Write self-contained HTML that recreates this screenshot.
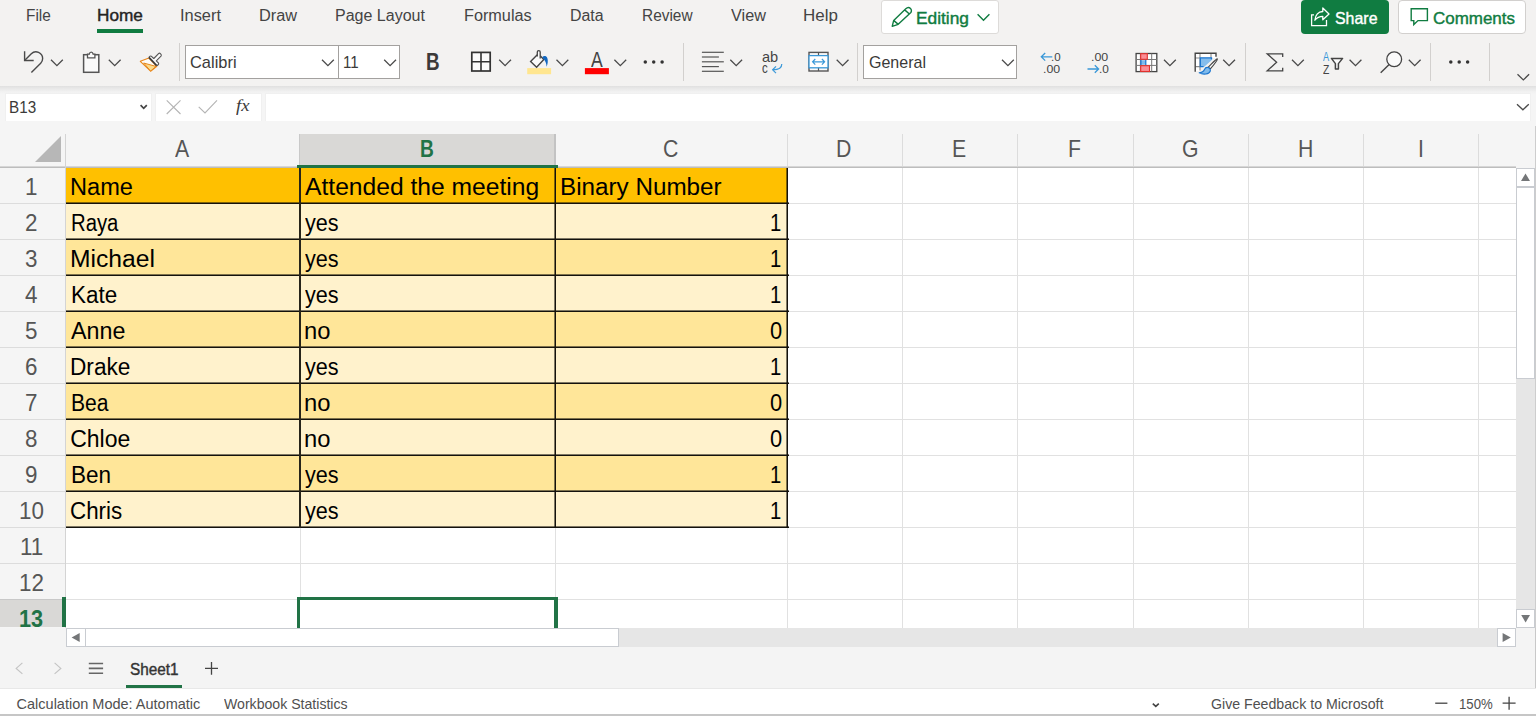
<!DOCTYPE html>
<html lang="en"><head><meta charset="utf-8"><title>Excel</title>
<style>
html,body{margin:0;padding:0}
body{width:1536px;height:716px;position:relative;overflow:hidden;background:#f3f2f1;font-family:"Liberation Sans",sans-serif}
body>div,body>svg,.a{position:absolute}
.t{position:absolute;white-space:nowrap;transform-origin:0 50%;display:block}
svg{overflow:visible}
</style></head><body>
<span class="t" style="left:26.37px;top:6px;font-size:16px;line-height:19px;color:#444;transform:scaleX(0.9596);">File</span>
<span class="t" style="left:179.83px;top:6px;font-size:16px;line-height:19px;color:#444;transform:scaleX(1.0239);">Insert</span>
<span class="t" style="left:258.99px;top:6px;font-size:16px;line-height:19px;color:#444;transform:scaleX(1.0200);">Draw</span>
<span class="t" style="left:335.02px;top:6px;font-size:16px;line-height:19px;color:#444;">Page Layout</span>
<span class="t" style="left:464.00px;top:6px;font-size:16px;line-height:19px;color:#444;transform:scaleX(1.0142);">Formulas</span>
<span class="t" style="left:569.53px;top:6px;font-size:16px;line-height:19px;color:#444;transform:scaleX(0.9945);">Data</span>
<span class="t" style="left:641.57px;top:6px;font-size:16px;line-height:19px;color:#444;transform:scaleX(0.9629);">Review</span>
<span class="t" style="left:731.22px;top:6px;font-size:16px;line-height:19px;color:#444;transform:scaleX(1.0140);">View</span>
<span class="t" style="left:802.94px;top:6px;font-size:16px;line-height:19px;color:#444;transform:scaleX(1.0594);">Help</span>
<span class="t" style="left:97.02px;top:6px;font-size:16px;line-height:19px;color:#252423;-webkit-text-stroke:0.4px #252423;transform:scaleX(1.0753);">Home</span>
<div style="left:97px;top:29px;width:46px;height:3.5px;background:#107c41;"></div>
<div style="left:881px;top:0px;width:118px;height:33.5px;background:#fff;border:1px solid #dddbd9;border-radius:3px;box-sizing:border-box;"></div>
<span class="t" style="left:916.01px;top:8px;font-size:16.5px;line-height:20px;color:#107c41;-webkit-text-stroke:0.4px #107c41;transform:scaleX(1.0497);">Editing</span>
<div style="left:1300.7px;top:0px;width:88.4px;height:33.6px;background:#107c41;border-radius:4px;"></div>
<span class="t" style="left:1335.38px;top:8px;font-size:16.5px;line-height:20px;color:#fff;-webkit-text-stroke:0.4px #fff;transform:scaleX(0.9650);">Share</span>
<div style="left:1398.3px;top:0px;width:128.2px;height:33.6px;background:#fff;border:1px solid #d2d0ce;border-radius:4px;box-sizing:border-box;"></div>
<span class="t" style="left:1433.25px;top:8px;font-size:16.5px;line-height:20px;color:#107c41;-webkit-text-stroke:0.4px #107c41;transform:scaleX(1.0271);">Comments</span>
<div style="left:179px;top:43px;width:1px;height:38px;background:#d2d0ce;"></div>
<div style="left:683px;top:43px;width:1px;height:38px;background:#d2d0ce;"></div>
<div style="left:857px;top:43px;width:1px;height:38px;background:#d2d0ce;"></div>
<div style="left:1245px;top:43px;width:1px;height:38px;background:#d2d0ce;"></div>
<div style="left:1430px;top:43px;width:1px;height:38px;background:#d2d0ce;"></div>
<div style="left:1489px;top:43px;width:1px;height:38px;background:#d2d0ce;"></div>
<div style="left:185px;top:45px;width:154px;height:34px;background:#fff;border:1px solid #a3a19f;box-sizing:border-box;"></div>
<div style="left:338px;top:45px;width:62px;height:34px;background:#fff;border:1px solid #a3a19f;box-sizing:border-box;"></div>
<span class="t" style="left:189.98px;top:53px;font-size:17px;line-height:20px;color:#3b3a39;transform:scaleX(0.9663);">Calibri</span>
<span class="t" style="left:343.17px;top:53px;font-size:17px;line-height:20px;color:#3b3a39;transform:scaleX(0.8872);">11</span>
<div style="left:863px;top:45px;width:154px;height:34px;background:#fff;border:1px solid #a3a19f;box-sizing:border-box;"></div>
<span class="t" style="left:869.00px;top:53px;font-size:17px;line-height:20px;color:#3b3a39;transform:scaleX(0.9422);">General</span>
<span class="t" style="left:426.37px;top:47px;font-size:24px;line-height:29px;color:#3b3a39;font-weight:700;transform:scaleX(0.7855);">B</span>
<div style="left:0px;top:86px;width:1536px;height:36px;background:#f5f5f5;"></div>
<div style="left:0px;top:86px;width:1536px;height:8px;background:linear-gradient(#e0e0e0,#e9e9e9 35%,#f1f1f1 70%,#f5f5f5);"></div>
<div style="left:5.5px;top:94px;width:145.5px;height:27px;background:#fff;box-shadow:0 0 0 1px #f0f0f0;"></div>
<div style="left:156px;top:94px;width:105px;height:27px;background:#fff;box-shadow:0 0 0 1px #f0f0f0;"></div>
<div style="left:266px;top:94px;width:1264px;height:27px;background:#fff;box-shadow:0 0 0 1px #f0f0f0;"></div>
<span class="t" style="left:8.58px;top:98px;font-size:16px;line-height:19px;color:#3b3a39;transform:scaleX(0.9526);">B13</span>
<span class="t" style="left:236.11px;top:95px;font-size:17.5px;line-height:21px;color:#3a3a3a;font-family:'Liberation Serif',serif;font-style:italic;transform:scaleX(1.0699);">fx</span>
<svg class="a" style="left:0;top:0" width="1536" height="125" viewBox="0 0 1536 125">
<path d="M24.6 51.2V60.5H33.7" fill="none" stroke="#4a4a4a" stroke-width="1.4"/>
<path d="M24.8 60.3L31.3 53.8A6.65 6.65 0 0 1 42.65 58.5A6.65 6.65 0 0 1 40.7 63.2L31.4 72.6" fill="none" stroke="#4a4a4a" stroke-width="1.4"/>
<path d="M51 59.8l5.9 5.9l5.9 -5.9" fill="none" stroke="#4a4a4a" stroke-width="1.3"/>
<rect x="83.6" y="54.7" width="15.2" height="17.6" fill="#fafafa" stroke="#555" stroke-width="1.5"/>
<path d="M87.5 57.9V54.2H89.3C89.5 52.9 90.3 52.2 91.2 52.2C92.1 52.2 92.9 52.9 93.1 54.2H94.9V57.9Z" fill="#fafafa" stroke="#555" stroke-width="1.3"/>
<path d="M108.8 59.7l5.9 5.9l5.9 -5.9" fill="none" stroke="#4a4a4a" stroke-width="1.3"/>
<path d="M140.3 61.3L148.9 58L156.8 66.3L150.6 71.2Z" fill="#fdfbf7" stroke="#e8861a" stroke-width="1.1" stroke-linejoin="round"/>
<path d="M143.6 63L156 66.4L150.6 71Z" fill="#fbdc8c" stroke="#e8861a" stroke-width="1" stroke-linejoin="round"/>
<path d="M148.9 57.4C149.5 56.2 150.4 55.8 151.2 56.2L153.8 58.5L158.8 53.4C159.8 52.6 161.8 54.6 161.2 55.8L156.3 60.8L158.6 63.2C159 64 158 65.2 156.7 65.6" fill="#fafafa" stroke="#555" stroke-width="1.1" stroke-linejoin="round"/>
<path d="M148.9 57.4L156.7 65.6" stroke="#3a3a3a" stroke-width="1.6"/>
<path d="M322 59.7l5.9 5.9l5.9 -5.9" fill="none" stroke="#4a4a4a" stroke-width="1.3"/>
<path d="M384.2 59.7l5.9 5.9l5.9 -5.9" fill="none" stroke="#4a4a4a" stroke-width="1.3"/>
<path d="M1002 59.7l5.9 5.9l5.9 -5.9" fill="none" stroke="#4a4a4a" stroke-width="1.3"/>
<rect x="471.8" y="52.4" width="18.4" height="18.6" fill="#fafafa" stroke="#333" stroke-width="1.7"/>
<path d="M481 52.4V71M471.8 61.7H490.2" stroke="#333" stroke-width="1.6" fill="none"/>
<path d="M499.2 59.7l5.9 5.9l5.9 -5.9" fill="none" stroke="#4a4a4a" stroke-width="1.3"/>
<rect x="527.2" y="68.1" width="23.9" height="6.1" fill="#ffe690"/>
<path d="M537.3 54.7L530.6 61.4L536.6 67.2L543.8 59.5L540.2 55.8" fill="#fafafa" stroke="#444" stroke-width="1.4" stroke-linejoin="miter"/>
<path d="M537.3 56.4V52A1.45 1.45 0 0 1 540.2 52V58.6" fill="#fafafa" stroke="#444" stroke-width="1.3"/>
<path d="M542.2 57.3C543.5 55.6 546.2 55.5 547.3 58C548.3 60.5 547.6 64.5 546.6 66.8C546.4 63.5 545.6 60.8 542.2 57.3Z" fill="#1267c0"/>
<path d="M556.5 59.8l5.9 5.9l5.9 -5.9" fill="none" stroke="#4a4a4a" stroke-width="1.3"/>
<rect x="584.9" y="68.1" width="24" height="6.1" fill="#f00"/>
<path d="M614.4 59.7l5.9 5.9l5.9 -5.9" fill="none" stroke="#4a4a4a" stroke-width="1.3"/>
<circle cx="645.3" cy="61.9" r="1.75" fill="#333"/>
<circle cx="653.7" cy="61.9" r="1.75" fill="#333"/>
<circle cx="662.1" cy="61.9" r="1.75" fill="#333"/>
<circle cx="1450.8" cy="61.9" r="1.75" fill="#333"/>
<circle cx="1459.2" cy="61.9" r="1.75" fill="#333"/>
<circle cx="1467.6" cy="61.9" r="1.75" fill="#333"/>
<path d="M701.9 52.3H723.8" stroke="#555" stroke-width="1.2"/>
<path d="M701.9 57H718.9" stroke="#555" stroke-width="1.2"/>
<path d="M701.9 61.8H723.8" stroke="#555" stroke-width="1.2"/>
<path d="M701.9 66.6H718.9" stroke="#555" stroke-width="1.2"/>
<path d="M701.9 71.3H723.8" stroke="#555" stroke-width="1.2"/>
<path d="M730.3 59.7l5.9 5.9l5.9 -5.9" fill="none" stroke="#4a4a4a" stroke-width="1.3"/>
<path d="M781.8 64C781.8 68 778.5 69.8 773 69.8M776 66.3L772.6 69.8L776 73.2" fill="none" stroke="#3a98d8" stroke-width="1.2"/>
<rect x="809" y="52.4" width="19" height="18.6" fill="#fafafa" stroke="#555" stroke-width="1.4"/>
<path d="M818.5 52.4V71" stroke="#555" stroke-width="1.2"/>
<rect x="809" y="55.6" width="19" height="12.2" fill="#fff" stroke="#3a98d8" stroke-width="1.3"/>
<path d="M812.6 61.8H824.6M815.3 59L812.6 61.8L815.3 64.6M821.9 59L824.6 61.8L821.9 64.6" fill="none" stroke="#3a98d8" stroke-width="1.2"/>
<path d="M836.7 59.7l5.9 5.9l5.9 -5.9" fill="none" stroke="#4a4a4a" stroke-width="1.3"/>
<path d="M1041.3 56.8H1052.3M1045.2 53L1041.3 56.8L1045.2 60.6" fill="none" stroke="#3a98d8" stroke-width="1.3"/>
<path d="M1087.5 69H1098.6M1094.8 65.2L1098.6 69L1094.8 72.8" fill="none" stroke="#3a98d8" stroke-width="1.3"/>
<rect x="1136.1" y="53.5" width="20.7" height="18.1" fill="#fff" stroke="#444" stroke-width="1.3"/>
<path d="M1140.4 53.5V71.6M1151.7 53.5V71.6M1136.1 59.5H1156.8M1136.1 65.4H1156.8" stroke="#777" stroke-width="1" fill="none"/>
<rect x="1140.7" y="53.7" width="6.6" height="5.6" fill="#fb8e96" stroke="#e2312d" stroke-width="1.1"/>
<rect x="1140.7" y="60.2" width="5.2" height="4.6" fill="#7fbaeb" stroke="none"/>
<path d="M1140.9 60V65M1145.8 60V65" stroke="#1a75cf" stroke-width="1.2"/>
<rect x="1140.7" y="65.7" width="8.8" height="5.8" fill="#fb8e96" stroke="#e2312d" stroke-width="1.1"/>
<path d="M1164 59.8l5.9 5.9l5.9 -5.9" fill="none" stroke="#4a4a4a" stroke-width="1.3"/>
<path d="M1195.2 71V53.2H1216V58H1200V71Z" fill="#fff" stroke="none"/>
<path d="M1200 54V70.5M1211 54V58M1195.5 58H1200M1195.5 66.6H1200" fill="none" stroke="#8a8a8a" stroke-width="1.1"/>
<path d="M1195.2 71.7V53.2H1216V56.7" fill="none" stroke="#444" stroke-width="1.4"/>
<path d="M1200.2 57.8H1211.6V60.3L1204.3 66.8H1200.2Z" fill="#85bdec"/>
<path d="M1203.6 66.6H1200.3V57.9H1211.5V59.5" fill="none" stroke="#1a75cf" stroke-width="1.3"/>
<path d="M1217.4 58.9C1217.9 59.9 1214 64.5 1210.3 68.9L1208.3 67.2C1212 63.5 1216.2 58.8 1217.4 58.9Z" fill="#fafafa" stroke="#444" stroke-width="1.1" stroke-linejoin="round"/>
<path d="M1208 67.5C1209.8 68 1210.8 69.6 1210.2 71.2C1209.2 74 1203.5 75.2 1199.2 72.7C1202.2 72.4 1203.8 71.2 1204.5 69.5C1205.2 67.8 1206.5 67.2 1208 67.5Z" fill="#7fbaeb" stroke="#1a75cf" stroke-width="1.1" stroke-linejoin="round"/>
<path d="M1223.2 59.8l5.9 5.9l5.9 -5.9" fill="none" stroke="#4a4a4a" stroke-width="1.3"/>
<path d="M1282.7 57V53.8H1267.2L1276.6 62.3L1267.2 70.8H1282.7V67.8" fill="none" stroke="#444" stroke-width="1.3"/>
<path d="M1292 59.7l5.9 5.9l5.9 -5.9" fill="none" stroke="#4a4a4a" stroke-width="1.3"/>
<path d="M1331.4 58.4H1342.6L1338.4 63.6V69H1335.4V63.6Z" fill="#fafafa" stroke="#444" stroke-width="1.5" stroke-linejoin="round"/>
<path d="M1349.6 59.7l5.9 5.9l5.9 -5.9" fill="none" stroke="#4a4a4a" stroke-width="1.3"/>
<circle cx="1394.2" cy="59.3" r="7.4" fill="#fafafa" stroke="#444" stroke-width="1.3"/>
<path d="M1388.9 64.7L1380.7 72.7" stroke="#444" stroke-width="1.4"/>
<path d="M1408.8 59.7l5.9 5.9l5.9 -5.9" fill="none" stroke="#4a4a4a" stroke-width="1.3"/>
<path d="M1517.5 74.3l5.8 5.6l5.8 -5.6" fill="none" stroke="#4a4a4a" stroke-width="1.3"/>
<path d="M1517 104.2l5.9 5.6l5.9 -5.6" fill="none" stroke="#4a4a4a" stroke-width="1.3"/>
<path d="M893.7 20.4L905.8 8.8C907.2 7.4 909.3 7.3 910.5 8.5C911.7 9.7 911.7 11.6 910.6 12.7L898.2 24.3L892.2 26.3ZM904.7 9.9L909.4 14M893.9 20.6L898 24.1" fill="none" stroke="#107c41" stroke-width="1.4" stroke-linejoin="round"/>
<path d="M977.6 14.2l5.9 6l5.9 -6" fill="none" stroke="#107c41" stroke-width="1.4"/>
<path d="M1314 14.9H1311.6V25.7H1326.5V20" fill="none" stroke="#fff" stroke-width="1.3"/>
<path d="M1314.9 20.2C1315.3 15.2 1318.4 11.7 1322.8 11.5V8L1329 14L1322.8 19.8V16.3C1319.5 16.3 1317 17.4 1314.9 20.2Z" fill="none" stroke="#fff" stroke-width="1.3" stroke-linejoin="round"/>
<path d="M1411.2 8.8H1427.4V20.6H1418L1413.8 24.6V20.6H1411.2Z" fill="none" stroke="#107c41" stroke-width="1.4" stroke-linejoin="miter"/>
<path d="M140.6 105.2L143.7 108.3L146.8 105.2" fill="none" stroke="#444" stroke-width="1.7"/>
<path d="M166.7 100.4L180.5 114M180.5 100.4L166.7 114" stroke="#b4b4b4" stroke-width="1.1"/>
<path d="M198.7 106.8L205 113L217 100.4" fill="none" stroke="#b4b4b4" stroke-width="1.1"/>
</svg>
<span class="t" style="left:590.70px;top:46px;font-size:22.4px;line-height:27px;color:#444;transform:scaleX(0.7854);">A</span>
<span class="t" style="left:762.32px;top:49px;font-size:14.5px;line-height:17px;color:#444;transform:scaleX(1.0044);">ab</span>
<span class="t" style="left:762.44px;top:60px;font-size:14.5px;line-height:17px;color:#444;transform:scaleX(0.7927);">c</span>
<span class="t" style="left:1050.86px;top:50px;font-size:11.6px;line-height:14px;color:#444;transform:scaleX(0.9956);">.0</span>
<span class="t" style="left:1043.39px;top:62px;font-size:11.6px;line-height:14px;color:#444;transform:scaleX(1.0631);">.00</span>
<span class="t" style="left:1091.48px;top:50px;font-size:11.6px;line-height:14px;color:#444;transform:scaleX(1.0699);">.00</span>
<span class="t" style="left:1098.84px;top:62px;font-size:11.6px;line-height:14px;color:#444;transform:scaleX(1.0199);">.0</span>
<span class="t" style="left:1322.80px;top:50px;font-size:12.3px;line-height:15px;color:#3a98d8;transform:scaleX(0.7458);">A</span>
<span class="t" style="left:1322.69px;top:63px;font-size:12.5px;line-height:15px;color:#444;transform:scaleX(0.8291);">Z</span>
<div style="left:0px;top:121px;width:1536px;height:48px;background:#f5f5f5;"></div>
<div style="left:0px;top:168px;width:66px;height:460px;background:#f5f5f5;"></div>
<div style="left:66px;top:168px;width:1450px;height:460px;background:#fff;"></div>
<div style="left:0px;top:166px;width:1516px;height:1px;background:#d6d6d6;"></div>
<div style="left:0px;top:167px;width:1516px;height:1px;background:#bdbdbd;"></div>
<div style="left:65px;top:134px;width:1px;height:494px;background:#d4d4d4;"></div>
<svg class="a" style="left:35px;top:136px" width="27" height="27"><path d="M26 0V26H0Z" fill="#b7b7b7"/></svg>
<div style="left:300px;top:168px;width:1px;height:460px;background:#e1e1e1;"></div>
<div style="left:300px;top:134px;width:1px;height:32px;background:#dcdcdc;"></div>
<div style="left:555px;top:168px;width:1px;height:460px;background:#e1e1e1;"></div>
<div style="left:555px;top:134px;width:1px;height:32px;background:#dcdcdc;"></div>
<div style="left:787px;top:168px;width:1px;height:460px;background:#e1e1e1;"></div>
<div style="left:787px;top:134px;width:1px;height:32px;background:#dcdcdc;"></div>
<div style="left:902px;top:168px;width:1px;height:460px;background:#e1e1e1;"></div>
<div style="left:902px;top:134px;width:1px;height:32px;background:#dcdcdc;"></div>
<div style="left:1017px;top:168px;width:1px;height:460px;background:#e1e1e1;"></div>
<div style="left:1017px;top:134px;width:1px;height:32px;background:#dcdcdc;"></div>
<div style="left:1133px;top:168px;width:1px;height:460px;background:#e1e1e1;"></div>
<div style="left:1133px;top:134px;width:1px;height:32px;background:#dcdcdc;"></div>
<div style="left:1248px;top:168px;width:1px;height:460px;background:#e1e1e1;"></div>
<div style="left:1248px;top:134px;width:1px;height:32px;background:#dcdcdc;"></div>
<div style="left:1363px;top:168px;width:1px;height:460px;background:#e1e1e1;"></div>
<div style="left:1363px;top:134px;width:1px;height:32px;background:#dcdcdc;"></div>
<div style="left:1478px;top:168px;width:1px;height:460px;background:#e1e1e1;"></div>
<div style="left:1478px;top:134px;width:1px;height:32px;background:#dcdcdc;"></div>
<div style="left:66px;top:203px;width:1450px;height:1px;background:#e1e1e1;"></div>
<div style="left:0px;top:203px;width:65px;height:1px;background:#dcdcdc;"></div>
<div style="left:66px;top:239px;width:1450px;height:1px;background:#e1e1e1;"></div>
<div style="left:0px;top:239px;width:65px;height:1px;background:#dcdcdc;"></div>
<div style="left:66px;top:275px;width:1450px;height:1px;background:#e1e1e1;"></div>
<div style="left:0px;top:275px;width:65px;height:1px;background:#dcdcdc;"></div>
<div style="left:66px;top:311px;width:1450px;height:1px;background:#e1e1e1;"></div>
<div style="left:0px;top:311px;width:65px;height:1px;background:#dcdcdc;"></div>
<div style="left:66px;top:347px;width:1450px;height:1px;background:#e1e1e1;"></div>
<div style="left:0px;top:347px;width:65px;height:1px;background:#dcdcdc;"></div>
<div style="left:66px;top:383px;width:1450px;height:1px;background:#e1e1e1;"></div>
<div style="left:0px;top:383px;width:65px;height:1px;background:#dcdcdc;"></div>
<div style="left:66px;top:419px;width:1450px;height:1px;background:#e1e1e1;"></div>
<div style="left:0px;top:419px;width:65px;height:1px;background:#dcdcdc;"></div>
<div style="left:66px;top:455px;width:1450px;height:1px;background:#e1e1e1;"></div>
<div style="left:0px;top:455px;width:65px;height:1px;background:#dcdcdc;"></div>
<div style="left:66px;top:491px;width:1450px;height:1px;background:#e1e1e1;"></div>
<div style="left:0px;top:491px;width:65px;height:1px;background:#dcdcdc;"></div>
<div style="left:66px;top:527px;width:1450px;height:1px;background:#e1e1e1;"></div>
<div style="left:0px;top:527px;width:65px;height:1px;background:#dcdcdc;"></div>
<div style="left:66px;top:563px;width:1450px;height:1px;background:#e1e1e1;"></div>
<div style="left:0px;top:563px;width:65px;height:1px;background:#dcdcdc;"></div>
<div style="left:66px;top:599px;width:1450px;height:1px;background:#e1e1e1;"></div>
<div style="left:0px;top:599px;width:65px;height:1px;background:#dcdcdc;"></div>
<div style="left:299px;top:134px;width:257px;height:32px;background:#d9d8d6;"></div>
<div style="left:554px;top:134px;width:2px;height:32px;background:#c3c3c3;"></div>
<div style="left:299px;top:134px;width:1px;height:32px;background:#c9c9c9;"></div>
<div style="left:297px;top:165px;width:261px;height:3px;background:#217346;"></div>
<div style="left:0px;top:598.5px;width:65px;height:1px;background:#c8c8c8;"></div>
<div style="left:0px;top:599.5px;width:65px;height:27.5px;background:#d9d8d6;"></div>
<div style="left:62px;top:597px;width:4px;height:30px;background:#217346;"></div>
<div style="left:66px;top:168px;width:722px;height:36px;background:#ffc000;"></div>
<div style="left:66px;top:204px;width:722px;height:36px;background:#fff2cc;"></div>
<div style="left:66px;top:240px;width:722px;height:36px;background:#ffe699;"></div>
<div style="left:66px;top:276px;width:722px;height:36px;background:#fff2cc;"></div>
<div style="left:66px;top:312px;width:722px;height:36px;background:#ffe699;"></div>
<div style="left:66px;top:348px;width:722px;height:36px;background:#fff2cc;"></div>
<div style="left:66px;top:384px;width:722px;height:36px;background:#ffe699;"></div>
<div style="left:66px;top:420px;width:722px;height:36px;background:#fff2cc;"></div>
<div style="left:66px;top:456px;width:722px;height:36px;background:#ffe699;"></div>
<div style="left:66px;top:492px;width:722px;height:36px;background:#fff2cc;"></div>
<div style="left:66px;top:202px;width:723px;height:1px;background:rgba(20,18,12,.55);"></div>
<div style="left:66px;top:203px;width:723px;height:1px;background:#14120c;"></div>
<div style="left:66px;top:238px;width:723px;height:1px;background:rgba(20,18,12,.55);"></div>
<div style="left:66px;top:239px;width:723px;height:1px;background:#14120c;"></div>
<div style="left:66px;top:274px;width:723px;height:1px;background:rgba(20,18,12,.55);"></div>
<div style="left:66px;top:275px;width:723px;height:1px;background:#14120c;"></div>
<div style="left:66px;top:310px;width:723px;height:1px;background:rgba(20,18,12,.55);"></div>
<div style="left:66px;top:311px;width:723px;height:1px;background:#14120c;"></div>
<div style="left:66px;top:346px;width:723px;height:1px;background:rgba(20,18,12,.55);"></div>
<div style="left:66px;top:347px;width:723px;height:1px;background:#14120c;"></div>
<div style="left:66px;top:382px;width:723px;height:1px;background:rgba(20,18,12,.55);"></div>
<div style="left:66px;top:383px;width:723px;height:1px;background:#14120c;"></div>
<div style="left:66px;top:418px;width:723px;height:1px;background:rgba(20,18,12,.55);"></div>
<div style="left:66px;top:419px;width:723px;height:1px;background:#14120c;"></div>
<div style="left:66px;top:454px;width:723px;height:1px;background:rgba(20,18,12,.55);"></div>
<div style="left:66px;top:455px;width:723px;height:1px;background:#14120c;"></div>
<div style="left:66px;top:490px;width:723px;height:1px;background:rgba(20,18,12,.55);"></div>
<div style="left:66px;top:491px;width:723px;height:1px;background:#14120c;"></div>
<div style="left:66px;top:526px;width:723px;height:1px;background:rgba(20,18,12,.55);"></div>
<div style="left:66px;top:527px;width:723px;height:1px;background:#14120c;"></div>
<div style="left:299px;top:168px;width:2px;height:360px;background:#27241a;"></div>
<div style="left:554px;top:168px;width:1px;height:360px;background:rgba(20,18,12,.55);"></div>
<div style="left:555px;top:168px;width:1px;height:360px;background:#14120c;"></div>
<div style="left:786px;top:168px;width:1px;height:360px;background:rgba(20,18,12,.55);"></div>
<div style="left:787px;top:168px;width:1px;height:360px;background:#14120c;"></div>
<span class="t" style="left:175.24px;top:135px;font-size:23.6px;line-height:28px;color:#565656;transform:scaleX(0.9000);">A</span>
<span class="t" style="left:662.69px;top:135px;font-size:23.6px;line-height:28px;color:#565656;transform:scaleX(0.9000);">C</span>
<span class="t" style="left:836.48px;top:135px;font-size:23.6px;line-height:28px;color:#565656;transform:scaleX(0.9000);">D</span>
<span class="t" style="left:952.01px;top:135px;font-size:23.6px;line-height:28px;color:#565656;transform:scaleX(0.9000);">E</span>
<span class="t" style="left:1067.60px;top:135px;font-size:23.6px;line-height:28px;color:#565656;transform:scaleX(0.9000);">F</span>
<span class="t" style="left:1181.98px;top:135px;font-size:23.6px;line-height:28px;color:#565656;transform:scaleX(0.9000);">G</span>
<span class="t" style="left:1297.85px;top:135px;font-size:23.6px;line-height:28px;color:#565656;transform:scaleX(0.9000);">H</span>
<span class="t" style="left:1417.58px;top:135px;font-size:23.6px;line-height:28px;color:#565656;transform:scaleX(0.9000);">I</span>
<span class="t" style="left:419.75px;top:135px;font-size:23.6px;line-height:28px;color:#217346;font-weight:700;transform:scaleX(0.8127);">B</span>
<span class="t" style="left:24.94px;top:173px;font-size:23.6px;line-height:28px;color:#565656;transform:scaleX(0.9500);">1</span>
<span class="t" style="left:25.28px;top:209px;font-size:23.6px;line-height:28px;color:#565656;transform:scaleX(0.9500);">2</span>
<span class="t" style="left:25.28px;top:245px;font-size:23.6px;line-height:28px;color:#565656;transform:scaleX(0.9500);">3</span>
<span class="t" style="left:25.39px;top:281px;font-size:23.6px;line-height:28px;color:#565656;transform:scaleX(0.9500);">4</span>
<span class="t" style="left:25.28px;top:317px;font-size:23.6px;line-height:28px;color:#565656;transform:scaleX(0.9500);">5</span>
<span class="t" style="left:25.17px;top:353px;font-size:23.6px;line-height:28px;color:#565656;transform:scaleX(0.9500);">6</span>
<span class="t" style="left:25.28px;top:389px;font-size:23.6px;line-height:28px;color:#565656;transform:scaleX(0.9500);">7</span>
<span class="t" style="left:25.22px;top:425px;font-size:23.6px;line-height:28px;color:#565656;transform:scaleX(0.9500);">8</span>
<span class="t" style="left:25.28px;top:461px;font-size:23.6px;line-height:28px;color:#565656;transform:scaleX(0.9500);">9</span>
<span class="t" style="left:18.61px;top:497px;font-size:23.6px;line-height:28px;color:#565656;transform:scaleX(0.9500);">10</span>
<span class="t" style="left:19.56px;top:533px;font-size:23.6px;line-height:28px;color:#565656;transform:scaleX(0.9500);">11</span>
<span class="t" style="left:18.78px;top:569px;font-size:23.6px;line-height:28px;color:#565656;transform:scaleX(0.9500);">12</span>
<span class="t" style="left:19.20px;top:605px;font-size:23.6px;line-height:28px;color:#217346;font-weight:700;transform:scaleX(0.9184);">13</span>
<span class="t" style="left:70.11px;top:173px;font-size:23px;line-height:28px;color:#000;transform:scaleX(1.0253);">Name</span>
<span class="t" style="left:70.68px;top:209px;font-size:23px;line-height:28px;color:#000;transform:scaleX(0.8831);">Raya</span>
<span class="t" style="left:70.33px;top:245px;font-size:23px;line-height:28px;color:#000;transform:scaleX(1.0725);">Michael</span>
<span class="t" style="left:70.51px;top:281px;font-size:23px;line-height:28px;color:#000;transform:scaleX(0.9754);">Kate</span>
<span class="t" style="left:71.30px;top:317px;font-size:23px;line-height:28px;color:#000;transform:scaleX(1.0120);">Anne</span>
<span class="t" style="left:70.49px;top:353px;font-size:23px;line-height:28px;color:#000;transform:scaleX(0.9843);">Drake</span>
<span class="t" style="left:70.62px;top:389px;font-size:23px;line-height:28px;color:#000;transform:scaleX(0.9156);">Bea</span>
<span class="t" style="left:70.15px;top:425px;font-size:23px;line-height:28px;color:#000;">Chloe</span>
<span class="t" style="left:70.50px;top:461px;font-size:23px;line-height:28px;color:#000;transform:scaleX(0.9786);">Ben</span>
<span class="t" style="left:70.18px;top:497px;font-size:23px;line-height:28px;color:#000;transform:scaleX(0.9720);">Chris</span>
<span class="t" style="left:305.10px;top:173px;font-size:23px;line-height:28px;color:#000;transform:scaleX(1.0713);">Attended the meeting</span>
<span class="t" style="left:304.99px;top:209px;font-size:23px;line-height:28px;color:#000;transform:scaleX(0.9384);">yes</span>
<span class="t" style="left:304.99px;top:245px;font-size:23px;line-height:28px;color:#000;transform:scaleX(0.9384);">yes</span>
<span class="t" style="left:304.99px;top:281px;font-size:23px;line-height:28px;color:#000;transform:scaleX(0.9384);">yes</span>
<span class="t" style="left:304.35px;top:317px;font-size:23px;line-height:28px;color:#000;transform:scaleX(1.0340);">no</span>
<span class="t" style="left:304.99px;top:353px;font-size:23px;line-height:28px;color:#000;transform:scaleX(0.9384);">yes</span>
<span class="t" style="left:304.35px;top:389px;font-size:23px;line-height:28px;color:#000;transform:scaleX(1.0340);">no</span>
<span class="t" style="left:304.35px;top:425px;font-size:23px;line-height:28px;color:#000;transform:scaleX(1.0340);">no</span>
<span class="t" style="left:304.99px;top:461px;font-size:23px;line-height:28px;color:#000;transform:scaleX(0.9384);">yes</span>
<span class="t" style="left:304.99px;top:497px;font-size:23px;line-height:28px;color:#000;transform:scaleX(0.9384);">yes</span>
<span class="t" style="left:559.66px;top:173px;font-size:23px;line-height:28px;color:#000;transform:scaleX(1.0535);">Binary Number</span>
<span class="t" style="left:770.08px;top:209px;font-size:23px;line-height:28px;color:#000;transform:scaleX(0.8796);">1</span>
<span class="t" style="left:770.08px;top:245px;font-size:23px;line-height:28px;color:#000;transform:scaleX(0.8796);">1</span>
<span class="t" style="left:770.08px;top:281px;font-size:23px;line-height:28px;color:#000;transform:scaleX(0.8796);">1</span>
<span class="t" style="left:769.72px;top:317px;font-size:23px;line-height:28px;color:#000;transform:scaleX(0.9511);">0</span>
<span class="t" style="left:770.08px;top:353px;font-size:23px;line-height:28px;color:#000;transform:scaleX(0.8796);">1</span>
<span class="t" style="left:769.72px;top:389px;font-size:23px;line-height:28px;color:#000;transform:scaleX(0.9511);">0</span>
<span class="t" style="left:769.72px;top:425px;font-size:23px;line-height:28px;color:#000;transform:scaleX(0.9511);">0</span>
<span class="t" style="left:770.08px;top:461px;font-size:23px;line-height:28px;color:#000;transform:scaleX(0.8796);">1</span>
<span class="t" style="left:770.08px;top:497px;font-size:23px;line-height:28px;color:#000;transform:scaleX(0.8796);">1</span>
<div style="left:300px;top:600px;width:1px;height:28px;background:#fff;"></div>
<div style="left:297px;top:597px;width:260.5px;height:3px;background:#217346;"></div>
<div style="left:297px;top:597px;width:3px;height:31px;background:#217346;"></div>
<div style="left:554.3px;top:597px;width:3.4px;height:31px;background:#217346;"></div>
<div style="left:1516px;top:168px;width:20px;height:460px;background:#e6e6e6;"></div>
<div style="left:1535px;top:126px;width:1px;height:502px;background:#cdcdcd;"></div>
<div style="left:1516px;top:168px;width:19px;height:19px;background:#fff;border:1px solid #c9ccd1;box-sizing:border-box;"></div>
<div style="left:1516px;top:187px;width:19px;height:192px;background:#fff;border:1px solid #c9ccd1;box-sizing:border-box;"></div>
<div style="left:1516px;top:609px;width:19px;height:19px;background:#fff;border:1px solid #c9ccd1;box-sizing:border-box;"></div>
<div style="left:0px;top:628px;width:1536px;height:19px;background:#f4f4f4;"></div>
<div style="left:66px;top:628px;width:1450px;height:19px;background:#e6e6e6;"></div>
<div style="left:66px;top:628px;width:20px;height:19px;background:#fff;border:1px solid #c9ccd1;box-sizing:border-box;"></div>
<div style="left:85px;top:628px;width:534px;height:19px;background:#fff;border:1px solid #c9ccd1;box-sizing:border-box;"></div>
<div style="left:1497px;top:628px;width:19px;height:19px;background:#fff;border:1px solid #c9ccd1;box-sizing:border-box;"></div>
<svg class="a" style="left:1516px;top:168px" width="19" height="19"><path d="M9.5 5.6L14 13H5Z" fill="#747678"/></svg>
<svg class="a" style="left:1516px;top:609px" width="19" height="19"><path d="M9.6 13.4L14 6H5.2Z" fill="#747678"/></svg>
<svg class="a" style="left:66px;top:628px" width="20" height="19"><path d="M5.6 9.5L13.7 5V14Z" fill="#747678"/></svg>
<svg class="a" style="left:1497px;top:628px" width="19" height="19"><path d="M13.8 9.5L5.6 5V14Z" fill="#747678"/></svg>
<div style="left:0px;top:647px;width:1536px;height:42px;background:#f4f4f4;"></div>
<span class="t" style="left:129.61px;top:660px;font-size:16px;line-height:19px;color:#333;-webkit-text-stroke:0.4px #333;transform:scaleX(0.9578);">Sheet1</span>
<div style="left:126.4px;top:685px;width:56px;height:3px;background:#217346;"></div>
<svg class="a" style="left:0;top:640px" width="1536" height="76" viewBox="0 640 1536 76">
<path d="M22.4 662.9L16.2 668.4L22.4 673.9" fill="none" stroke="#c4c4c4" stroke-width="1.2"/>
<path d="M54.6 662.9L60.8 668.4L54.6 673.9" fill="none" stroke="#c4c4c4" stroke-width="1.2"/>
<path d="M88.8 663.5H103.1M88.8 668.4H103.1M88.8 673.3H103.1" stroke="#666" stroke-width="1.6"/>
<path d="M205 668.4H218M211.5 661.9V674.8" stroke="#444" stroke-width="1.3"/>
</svg>
<div style="left:1535px;top:628px;width:1px;height:60px;background:#c8c8c8;"></div>
<div style="left:0px;top:688px;width:1536px;height:1px;background:#e8e8e8;"></div>
<div style="left:0px;top:689px;width:1536px;height:25px;background:#fff;"></div>
<div style="left:0px;top:714px;width:1536px;height:2px;background:#c6c6c6;"></div>
<span class="t" style="left:16.57px;top:696px;font-size:14.5px;line-height:17px;color:#505050;">Calculation Mode: Automatic</span>
<span class="t" style="left:223.63px;top:696px;font-size:14.5px;line-height:17px;color:#505050;transform:scaleX(0.9728);">Workbook Statistics</span>
<span class="t" style="left:1210.59px;top:696px;font-size:14.5px;line-height:17px;color:#505050;transform:scaleX(0.9768);">Give Feedback to Microsoft</span>
<span class="t" style="left:1459.31px;top:696px;font-size:14.5px;line-height:17px;color:#505050;transform:scaleX(0.9092);">150%</span>
<svg class="a" style="left:0;top:690px" width="1536" height="26" viewBox="0 690 1536 26">
<path d="M1435.2 703.2H1447.4" stroke="#444" stroke-width="1.3"/>
<path d="M1502.6 703.2H1515.6M1509.1 696.7V709.7" stroke="#444" stroke-width="1.3"/>
<path d="M1152.8 703.6L1155.8 706.4L1158.8 703.6" fill="none" stroke="#444" stroke-width="1.6"/>
</svg>
</body></html>
